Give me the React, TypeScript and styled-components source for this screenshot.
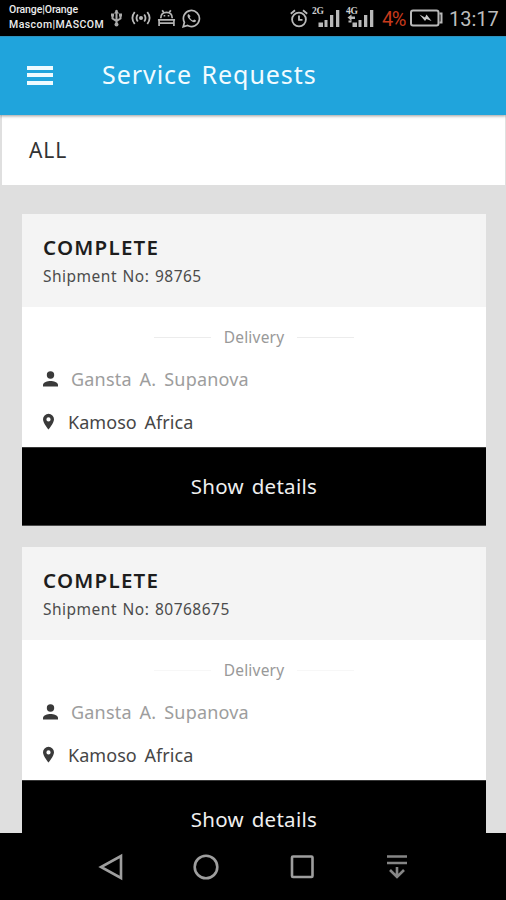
import React from "react";
import styled, { createGlobalStyle } from "styled-components";

const Global = createGlobalStyle`
  * { box-sizing: border-box; }
  body { margin: 0; background: #000; font-family: "Noto Sans", "Open Sans", sans-serif; }
`;

const Screen = styled.div`
  width: 506px;
  height: 900px;
  display: flex;
  flex-direction: column;
  overflow: hidden;
  background: #dfdfdf;
`;

const StatusBar = styled.header`
  flex: none;
  height: 36px;
  display: flex;
  align-items: center;
  background: #000;
  font-family: Roboto, sans-serif;
  color: #c4c4c4;
  svg { display: block; flex: none; }
`;

const Carriers = styled.div`
  width: 96px;
  margin: 0 5px 2px 9px;
  font-size: 10.5px;
  font-weight: 500;
  line-height: 15.5px;
  color: #ececec;
  white-space: nowrap;
`;

const Carrier = styled.div<{ $spacing: number }>`
  letter-spacing: ${(p) => p.$spacing}px;
`;

const Notifications = styled.div`
  display: flex;
  align-items: center;
  gap: 6px;
  svg:first-child { margin-right: 2px; }
`;

const SystemTray = styled.div`
  flex: 1;
  display: flex;
  align-items: center;
  justify-content: flex-end;
  padding-right: 8px;
`;

const Signals = styled.div`
  display: flex;
  gap: 5px;
  margin: 0 8px 0 3px;
`;

const Percent = styled.span`
  width: 28px;
  font-size: 20px;
  line-height: 24px;
  letter-spacing: -1.4px;
  color: #c73a1c;
  padding-top: 2px;
`;

const Clock = styled.span`
  width: 49px;
  margin-left: 6px;
  padding-top: 2px;
  font-size: 20px;
  line-height: 24px;
  color: #bdbdbd;
`;

const AppBar = styled.div`
  flex: none;
  position: relative;
  z-index: 1;
  height: 79px;
  display: flex;
  align-items: center;
  padding: 0 0 2px 27px;
  background: #20a4dc;
  border-top: 1px solid #2e91bd;
  box-shadow: 0 1px 3px rgba(0, 0, 0, 0.4);
`;

const MenuButton = styled.button`
  width: 26px;
  height: 19px;
  padding: 0;
  border: 0;
  background: none;
  display: flex;
  flex-direction: column;
  justify-content: space-between;
`;

const MenuLine = styled.span`
  width: 26px;
  height: 4px;
  background: #eefaff;
`;

const Title = styled.h1`
  margin: 0 0 2px 49px;
  font-size: 25px;
  line-height: 32px;
  font-weight: 400;
  letter-spacing: 0.95px;
  word-spacing: 2px;
  color: #f1fbff;
  white-space: nowrap;
`;

const FilterTab = styled.div`
  flex: none;
  height: 70px;
  margin: 0 1px 0 2px;
  padding: 21px 27px;
  background: #fff;
  font-size: 21px;
  line-height: 28px;
  letter-spacing: 0.9px;
  color: #333;
`;

const List = styled.main`
  flex: 1;
  min-height: 0;
  overflow: hidden;
  padding: 29px 20px 0 22px;
  display: flex;
  flex-direction: column;
  gap: 21px;
`;

const Card = styled.section`
  flex: none;
  height: 312px;
  display: flex;
  flex-direction: column;
  background: #fff;
`;

const CardHeader = styled.div`
  height: 93px;
  padding: 19px 21px 0;
  background: #f4f4f4;
`;

const Status = styled.h2`
  margin: 0 0 1px;
  font-size: 20.5px;
  line-height: 28px;
  font-weight: 600;
  letter-spacing: 1.25px;
  color: #1d1d1d;
`;

const Shipment = styled.div`
  font-size: 15.5px;
  line-height: 28px;
  letter-spacing: 0.5px;
  word-spacing: 1px;
  color: #4c4c4c;
`;

const Divider = styled.div`
  display: flex;
  justify-content: center;
  align-items: center;
  gap: 13px;
  height: 60px;
  font-size: 15.5px;
  letter-spacing: 0.2px;
  color: #999;
`;

const Rule = styled.span<{ $faint?: boolean }>`
  width: 57px;
  height: 1px;
  background: ${(p) => (p.$faint ? "#f7f7f7" : "#ececec")};
`;

const Detail = styled.div<{ $muted?: boolean }>`
  display: flex;
  align-items: center;
  height: 43px;
  padding-left: 20px;
  gap: 12px;
  font-size: 18px;
  letter-spacing: ${(p) => (p.$muted ? 0.2 : 0.05)}px;
  word-spacing: 3px;
  color: ${(p) => (p.$muted ? "#9d9d9d" : "#464646")};
  svg { flex: none; }
`;

const Details = styled.div`
  height: 78px;
  margin-top: -10px;
`;

const ShowButton = styled.button`
  height: 79px;
  margin-top: auto;
  border: 0;
  border-top: 1px solid #383838;
  border-bottom: 1px solid #4a4a4a;
  padding: 0 0 2px;
  background: #000;
  font-family: inherit;
  font-size: 20.5px;
  letter-spacing: 0.3px;
  word-spacing: 2px;
  color: #efefef;
`;

const NavBar = styled.nav`
  flex: none;
  height: 67px;
  display: flex;
  align-items: center;
  justify-content: center;
  gap: 67.5px;
  padding: 0 0 0 2px;
  background: #000;
`;

const UsbIcon = () => (
  <svg width="13" height="18" viewBox="0 0 13 18" fill="none" stroke="#a9a9a9">
    <path d="M6.500 1v14M2.500 6v3.500L6.500 12l4-2.500V6" strokeWidth="2" />
    <path d="M4 4.500L6.500 .5 9 4.500zM1 4.500h3v3H1zM9 4.500h3v3H9z" fill="#a9a9a9" stroke="none" />
    <circle cx="6.500" cy="15.500" r="2" fill="#a9a9a9" stroke="none" />
  </svg>
);

const HotspotIcon = () => (
  <svg width="20" height="18" viewBox="0 0 20 18" fill="none" stroke="#b9b9b9" strokeWidth="1.800">
    <circle cx="10" cy="9" r="2" fill="#b9b9b9" stroke="none" />
    <path d="M6.800 5.500q-2.600 3.500 0 7M13.200 5.500q2.600 3.500 0 7M3.700 3q-4.600 6 0 12M16.300 3q4.600 6 0 12" />
  </svg>
);

const DebugIcon = () => (
  <svg width="19" height="18" viewBox="0 0 20 18" fill="none" stroke="#b3b3b3" strokeWidth="1.800">
    <path d="M4 9.200C4 4.800 6.500 3 10 3s6 1.800 6 6.200M5.500 .8l1.600 2.700M14.500 .8l-1.600 2.700" />
    <path d="M1 11h18M2.200 11v6.500M17.800 11v6.500M2.200 14.500h15.600" />
    <path d="M7 5.800h1.700v1.700H7zM11.300 5.800H13v1.700h-1.700z" fill="#b3b3b3" stroke="none" />
  </svg>
);

const WhatsAppIcon = () => (
  <svg width="19" height="19" viewBox="0 0 19 19" fill="none" stroke="#b9b9b9" strokeWidth="1.700">
    <path d="M1.200 17.700l1.200-4.400A8 8 0 1 1 5.600 16.500z" />
    <path d="M6.700 4.900c-1.800.8-1.500 3 .4 5.100 2.200 2.500 4.800 4 6.300 2.800 1.200-1 .7-1.600-1.300-2.400l-1.100 1.100C9.400 10.900 8.200 9.700 7.700 8.300l.9-1z" fill="#b9b9b9" stroke="none" />
  </svg>
);

const AlarmIcon = () => (
  <svg width="18" height="19" viewBox="0 0 18 19" fill="none" stroke="#b9b9b9" strokeWidth="1.800">
    <circle cx="9" cy="10.500" r="6.900" />
    <path d="M.8 4.700L5 1.300M17.200 4.700L13 1.300M9 6.500v4.300h3.500" />
  </svg>
);

const NetworkLabel = styled.text`
  font: bold 9.5px "Liberation Serif", serif;
  letter-spacing: -0.2px;
  fill: #d0d0d0;
`;

const SignalIcon = ({ label, data }: { label: string; data?: boolean }) => (
  <svg width="29" height="24" viewBox="0 0 29 24" fill="#b9b9b9">
    <NetworkLabel x="1" y="8">{label}</NetworkLabel>
    <path d="M7.500 16.500h4.500v4.500H7.500zM13.500 14h3v7h-3zM19 9h3.300v12H19zM25 4h3.300v17H25z" />
    {data && <path d="M2.500 11.500l4-3v2H10v2.500H6.500v2zM3.500 14.500h3v2h-3z" />}
  </svg>
);

const BatteryIcon = () => (
  <svg width="33" height="18" viewBox="0 0 33 18" fill="none" stroke="#b9b9b9" strokeWidth="2">
    <rect x="1" y="1.500" width="27.500" height="15" rx="2" />
    <path d="M29.500 4.500h2v9h-2" />
    <path d="M9.500 5.500l5.500 3 1.500-3 5 6.500-5-2-1.500 2z" fill="#c9c9c9" stroke="none" />
  </svg>
);

const PersonIcon = () => (
  <svg width="17" height="17" viewBox="0 0 17 17" fill="#3a3a3a">
    <circle cx="8.500" cy="5" r="3.700" />
    <path d="M1 16.500v-1.600c0-2.600 4.500-3.900 7.500-3.900s7.500 1.300 7.500 3.900v1.600z" />
  </svg>
);

const PinIcon = () => (
  <svg width="14" height="17" viewBox="0 0 14 17">
    <path fillRule="evenodd" fill="#3a3a3a" d="M6.500 .8A5.500 5.500 0 0 0 1 6.300C1 10.300 6.500 16.500 6.500 16.500S12 10.300 12 6.300A5.500 5.500 0 0 0 6.500 .8zM6.500 4.300a2.100 2.100 0 1 1 0 4.200 2.100 2.100 0 0 1 0-4.200z" />
  </svg>
);

const NavIcon = ({ children, dim }: { children: React.ReactNode; dim?: boolean }) => (
  <svg width="28" height="28" viewBox="0 0 28 28" fill="none" stroke={dim ? "#858585" : "#9e9e9e"} strokeWidth="2.600">
    {children}
  </svg>
);

const requests = [
  { shipment: "98765", faint: false },
  { shipment: "80768675", faint: true },
];

export default function App() {
  return (
    <Screen>
      <Global />
      <StatusBar>
        <Carriers>
          <Carrier $spacing={-0.1}>Orange|Orange</Carrier>
          <Carrier $spacing={0.45}>Mascom|MASCOM</Carrier>
        </Carriers>
        <Notifications>
          <UsbIcon />
          <HotspotIcon />
          <DebugIcon />
          <WhatsAppIcon />
        </Notifications>
        <SystemTray>
          <AlarmIcon />
          <Signals>
            <SignalIcon label="2G" />
            <SignalIcon label="4G" data />
          </Signals>
          <Percent>4%</Percent>
          <BatteryIcon />
          <Clock>13:17</Clock>
        </SystemTray>
      </StatusBar>
      <AppBar>
        <MenuButton aria-label="Menu">
          <MenuLine />
          <MenuLine />
          <MenuLine />
        </MenuButton>
        <Title>Service Requests</Title>
      </AppBar>
      <FilterTab>ALL</FilterTab>
      <List>
        {requests.map((r) => (
          <Card key={r.shipment}>
            <CardHeader>
              <Status>COMPLETE</Status>
              <Shipment>Shipment No: {r.shipment}</Shipment>
            </CardHeader>
            <Divider>
              <Rule $faint={r.faint} />
              <span>Delivery</span>
              <Rule $faint={r.faint} />
            </Divider>
            <Details>
              <Detail $muted>
                <PersonIcon />
                Gansta A. Supanova
              </Detail>
              <Detail>
                <PinIcon />
                Kamoso Africa
              </Detail>
            </Details>
            <ShowButton>Show details</ShowButton>
          </Card>
        ))}
      </List>
      <NavBar>
        <NavIcon>
          <path d="M24 3v22L4 14z" />
        </NavIcon>
        <NavIcon>
          <circle cx="14" cy="14" r="11.300" />
        </NavIcon>
        <NavIcon>
          <rect x="4" y="3.500" width="20.500" height="20.500" rx="1" />
        </NavIcon>
        <NavIcon dim>
          <path d="M4 3.500h20M4 10h20M14 14v10M7 17l7 7 7-7" />
        </NavIcon>
      </NavBar>
    </Screen>
  );
}
